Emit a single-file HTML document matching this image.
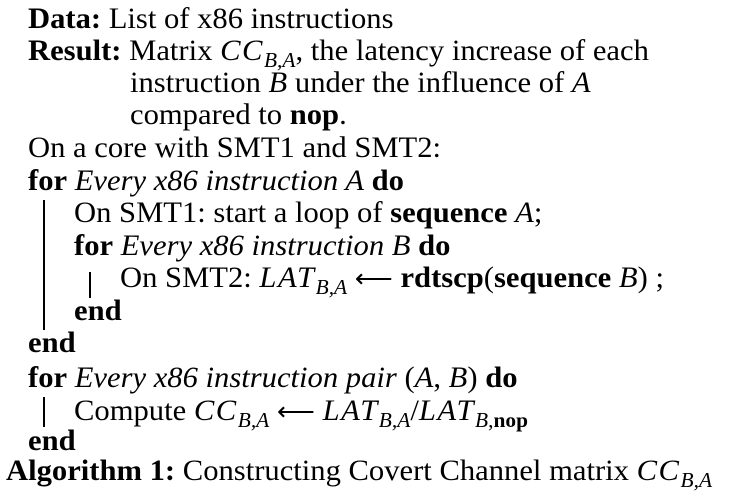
<!DOCTYPE html>
<html><head><meta charset="utf-8"><style>
body{margin:0;background:#fff;width:731px;height:502px;overflow:hidden;position:relative;font-family:"Liberation Serif",serif;font-size:30px;color:#000}
.l{position:absolute;white-space:nowrap;line-height:1;transform-origin:0 0;transform:scaleX(1.02)}
b{font-weight:bold}
i{font-style:italic}
i.m{letter-spacing:1.5px}
sub{font-size:21px;vertical-align:-7px;line-height:0}
.bar{position:absolute;width:1.5px;background:#000}
.ar{font-weight:normal;font-size:26px}
</style></head><body>
<div class="l" style="left:28px;top:4px"><b>Data:</b> List of x86 instructions</div>
<div class="l" style="left:28px;top:36px"><b>Result:</b> Matrix <i class="m">CC</i><sub><i>B,A</i></sub>, the latency increase of each</div>
<div class="l" style="left:130px;top:68px">instruction <i>B</i> under the influence of <i>A</i></div>
<div class="l" style="left:130px;top:100px">compared to <b>nop</b>.</div>
<div class="l" style="left:28px;top:133px">On a core with SMT1 and SMT2:</div>
<div class="l" style="left:28px;top:166px"><b>for</b> <i>Every x86 instruction A</i> <b>do</b></div>
<div class="bar" style="left:43px;top:200px;height:130px"></div>
<div class="l" style="left:74px;top:198px">On SMT1: start a loop of <b>sequence</b> <i>A</i>;</div>
<div class="l" style="left:74px;top:231px"><b>for</b> <i>Every x86 instruction B</i> <b>do</b></div>
<div class="bar" style="left:89px;top:272px;height:26px"></div>
<div class="l" style="left:120px;top:263px">On SMT2: <i class="m">LAT</i><sub><i>B,A</i></sub> <span class="ar">⟵</span> <b>rdtscp</b>(<b>sequence</b> <i>B</i>) ;</div>
<div class="l" style="left:74px;top:296px"><b>end</b></div>
<div class="l" style="left:28px;top:328px"><b>end</b></div>
<div class="l" style="left:28px;top:363px"><b>for</b> <i>Every x86 instruction pair</i> (<i>A</i>, <i>B</i>) <b>do</b></div>
<div class="bar" style="left:43px;top:397px;height:30px"></div>
<div class="l" style="left:74px;top:396px">Compute <i class="m">CC</i><sub><i>B,A</i></sub> <span class="ar">⟵</span> <i class="m">LAT</i><sub><i>B,A</i></sub>/<i class="m">LAT</i><sub><i>B</i>,<b>nop</b></sub></div>
<div class="l" style="left:28px;top:426px"><b>end</b></div>
<div class="l" style="left:6px;top:456px"><b>Algorithm 1:</b> Constructing Covert Channel matrix <i class="m">CC</i><sub><i>B,A</i></sub></div>
</body></html>
